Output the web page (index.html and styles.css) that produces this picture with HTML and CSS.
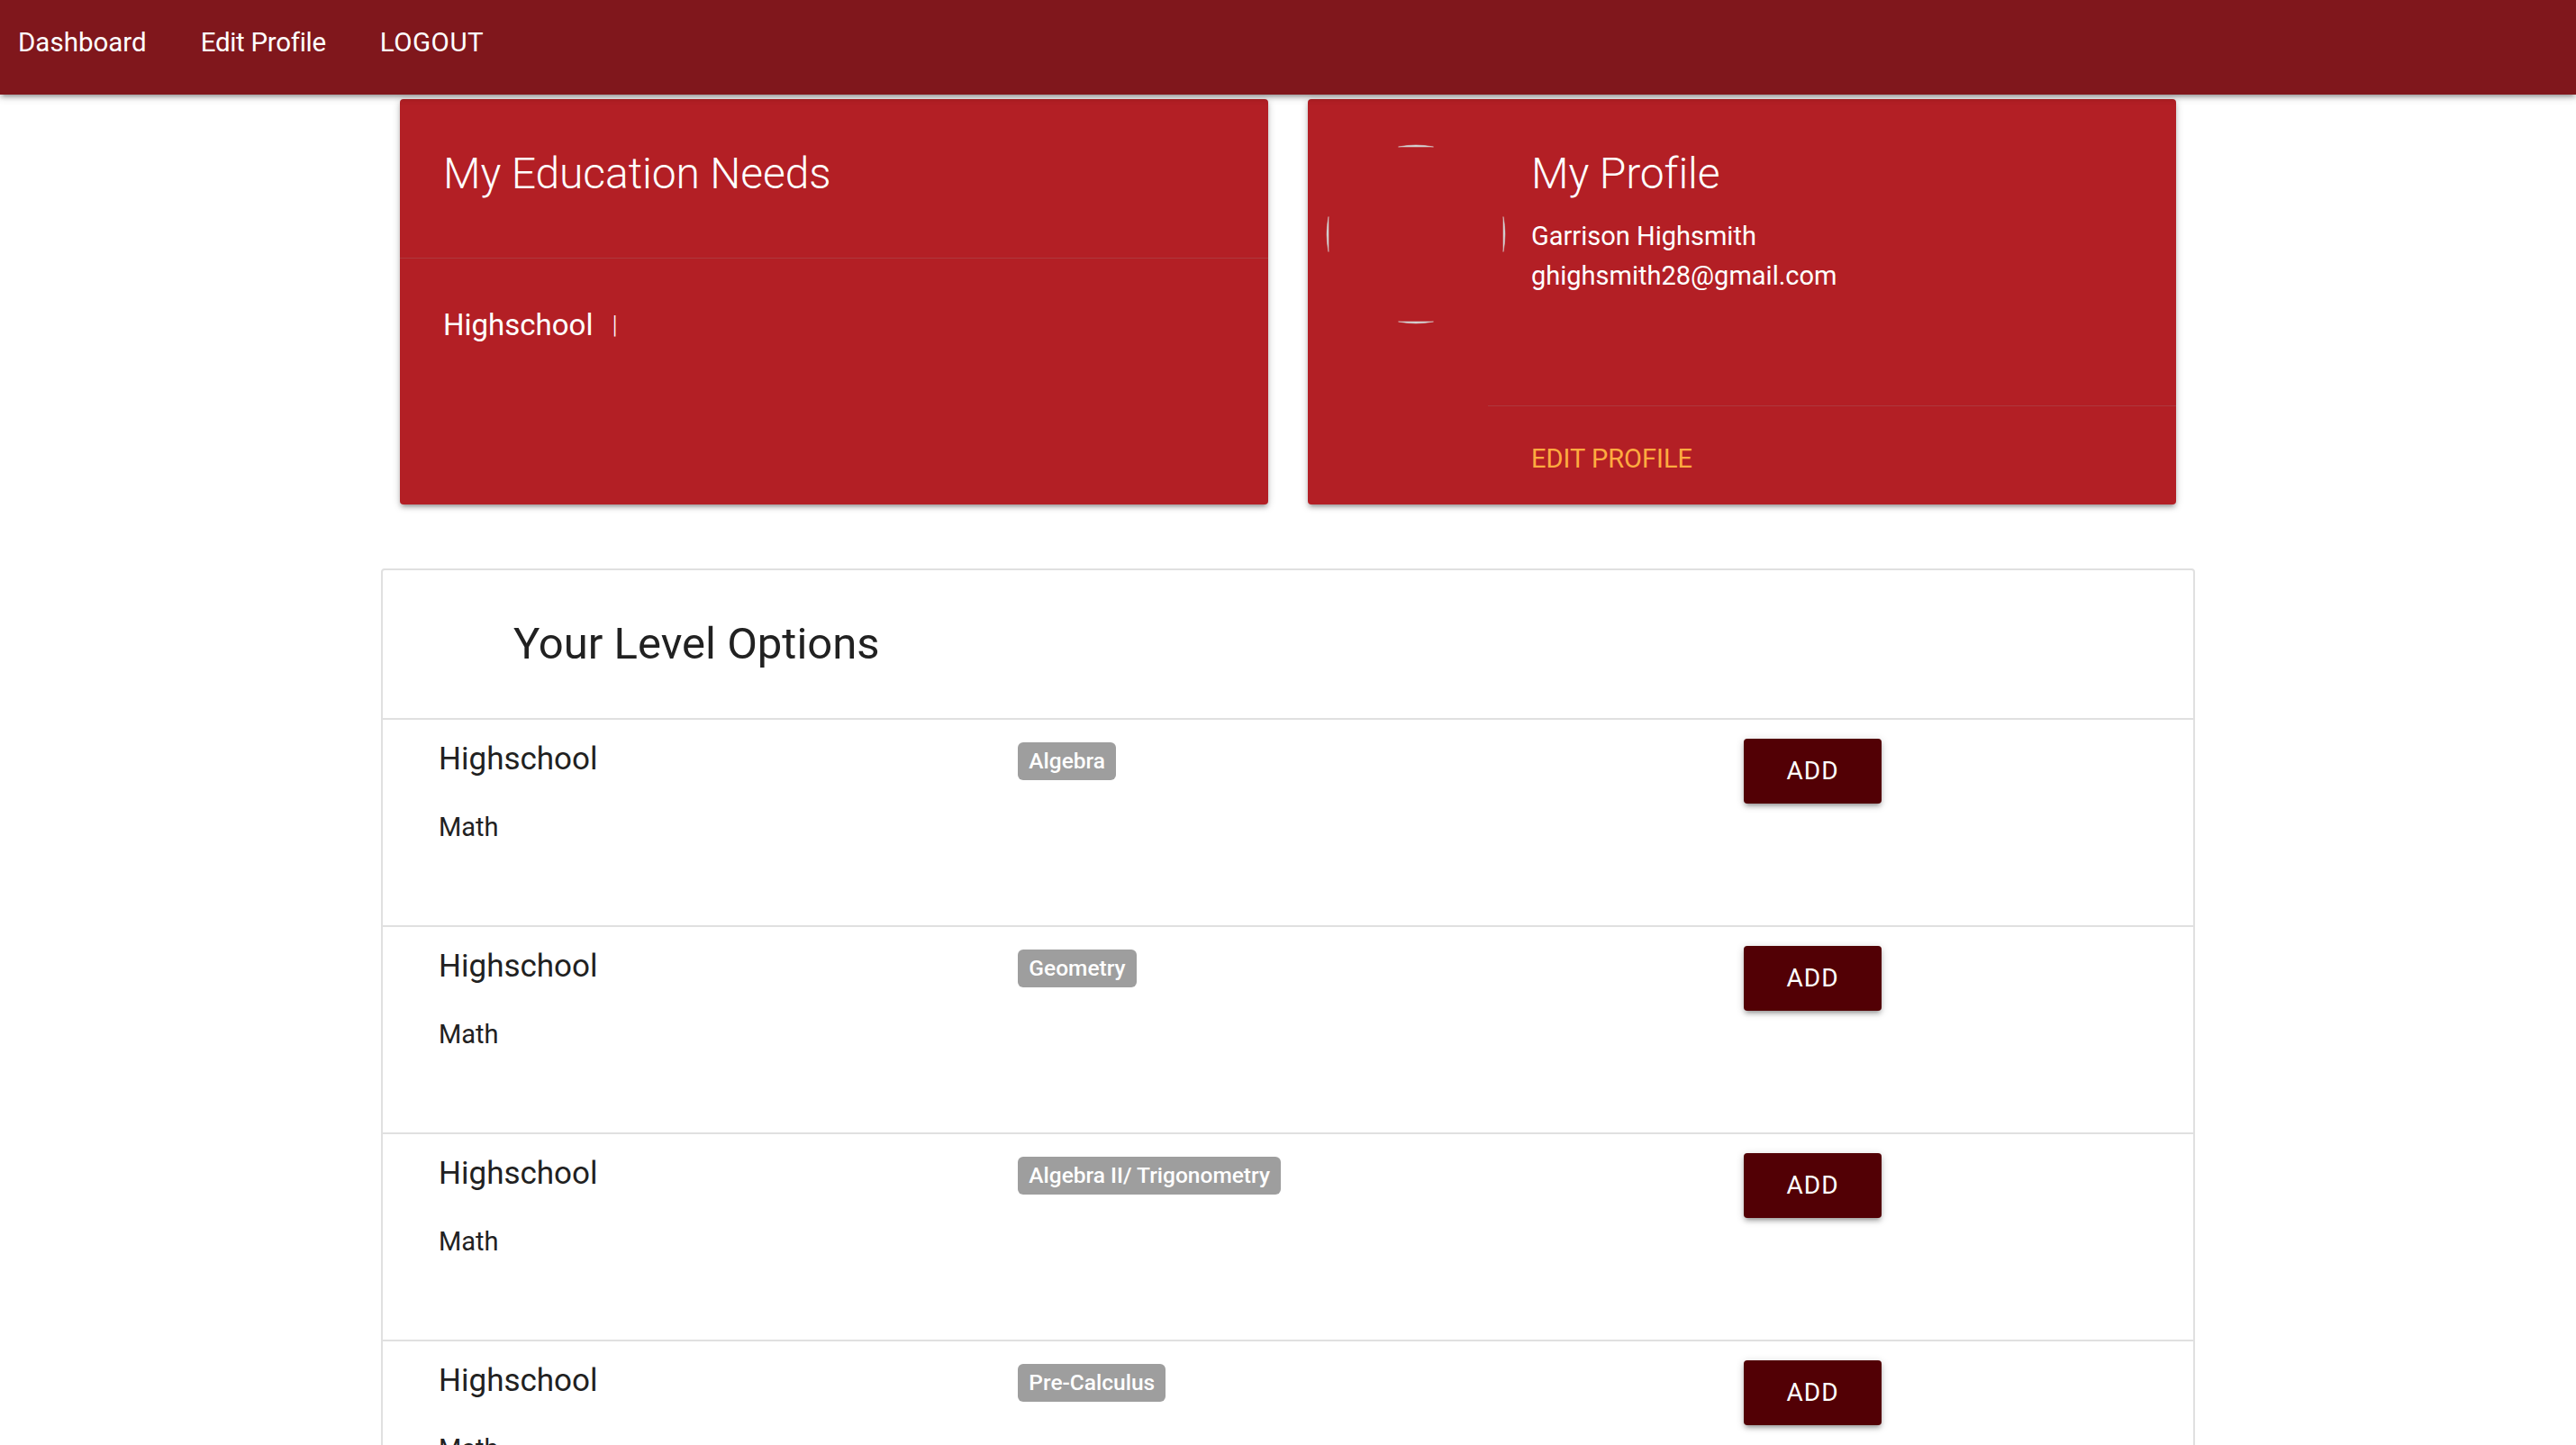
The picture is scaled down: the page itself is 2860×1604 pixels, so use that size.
FILE: index.html
```html
<!DOCTYPE html>
<html lang="en">
<head>
<meta charset="utf-8">
<title>Dashboard</title>
<link rel="stylesheet" href="styles.css">
</head>
<body>
<nav class="topnav">
  <ul class="nav-links">
    <li><a href="#">Dashboard</a></li>
    <li><a href="#">Edit Profile</a></li>
    <li><a href="#">LOGOUT</a></li>
  </ul>
</nav>

<main class="page">
  <section class="cards-row">
    <div class="card">
      <div class="card-content">
        <span class="card-title">My Education Needs</span>
      </div>
      <div class="card-action needs-action">
        <span class="need">Highschool</span><span class="sep">|</span>
      </div>
    </div>

    <div class="card horizontal">
      <div class="card-image">
        <svg class="avatar" width="200" height="300" viewBox="0 0 200 300" aria-hidden="true">
          <g fill="#cfcfcf" stroke="#d8d8d8" stroke-width="0.5">
            <path d="M100.5 53.0 A99 99 0 0 1 139.5 53.0 Z"/>
            <path d="M100.5 247.0 A99 99 0 0 0 139.5 247.0 Z"/>
            <path d="M23.0 130.5 A99 99 0 0 0 23.0 169.5 Z"/>
            <path d="M217.0 130.5 A99 99 0 0 1 217.0 169.5 Z"/>
          </g>
        </svg>
      </div>
      <div class="card-stacked">
        <div class="card-content profile-content">
          <span class="card-title">My Profile</span>
          <p>Garrison Highsmith</p>
          <p>ghighsmith28@gmail.com</p>
        </div>
        <div class="card-action">
          <a href="#" class="action-link">Edit Profile</a>
        </div>
      </div>
    </div>
  </section>

  <ul class="collection">
    <li class="collection-header"><h4>Your Level Options</h4></li>
    <li class="collection-item">
      <div class="col col-title"><div class="title">Highschool</div><p class="subject">Math</p></div>
      <div class="col col-badge"><span class="badge">Algebra</span></div>
      <div class="col col-btn"><a href="#" class="btn">Add</a></div>
    </li>
    <li class="collection-item">
      <div class="col col-title"><div class="title">Highschool</div><p class="subject">Math</p></div>
      <div class="col col-badge"><span class="badge">Geometry</span></div>
      <div class="col col-btn"><a href="#" class="btn">Add</a></div>
    </li>
    <li class="collection-item">
      <div class="col col-title"><div class="title">Highschool</div><p class="subject">Math</p></div>
      <div class="col col-badge"><span class="badge">Algebra II/ Trigonometry</span></div>
      <div class="col col-btn"><a href="#" class="btn">Add</a></div>
    </li>
    <li class="collection-item">
      <div class="col col-title"><div class="title">Highschool</div><p class="subject">Math</p></div>
      <div class="col col-badge"><span class="badge">Pre-Calculus</span></div>
      <div class="col col-btn"><a href="#" class="btn">Add</a></div>
    </li>
  </ul>
</main>
</body>
</html>
```

FILE: styles.css
```css
* { box-sizing: border-box; }

html, body {
  margin: 0;
  padding: 0;
  background: #ffffff;
  font-family: Roboto, "Noto Sans", "Liberation Sans", sans-serif;
  color: #212121;
}

a { text-decoration: none; }

/* ---------- top navigation ---------- */
.topnav {
  height: 105px;
  background: #80171c;
  box-shadow: 0 4px 4px 0 rgba(0,0,0,0.14), 0 6px 2px -4px rgba(0,0,0,0.12), 0 2px 10px 0 rgba(0,0,0,0.2);
  position: relative;
  z-index: 2;
}

.nav-links {
  list-style: none;
  margin: 0;
  padding: 0 0 0 20px;
  display: flex;
  gap: 60px;
}

.nav-links a {
  display: block;
  color: #ffffff;
  font-size: 29.5px;
  line-height: 95px;
}

.nav-links li:nth-child(2) a { letter-spacing: -0.3px; }
.nav-links li:nth-child(3) a { letter-spacing: 0.5px; }

/* ---------- page ---------- */
.page {
  width: 2014px;
  margin: 0 auto;
}

.cards-row {
  display: flex;
  gap: 44px;
  padding: 5px 21px 0;
}

.card {
  flex: 1 1 0;
  height: 450px;
  background: #b31f25;
  color: #ffffff;
  border-radius: 4px;
  box-shadow: 0 4px 4px 0 rgba(0,0,0,0.14), 0 6px 2px -4px rgba(0,0,0,0.12), 0 2px 10px 0 rgba(0,0,0,0.2);
  display: flex;
  flex-direction: column;
}

.card.horizontal { flex-direction: row; }

.card-content {
  padding: 51px 48px 45px;
}

.card-title {
  display: block;
  font-size: 48px;
  font-weight: 300;
  line-height: 64px;
  letter-spacing: -0.1px;
  margin-bottom: 16px;
}

.card-action {
  border-top: 1px solid rgba(160,160,160,0.2);
  padding: 32px 48px;
  flex: 1 1 auto;
}

.needs-action {
  padding-top: 50px;
  display: flex;
  align-items: flex-start;
}

.need {
  font-size: 33px;
  line-height: 48px;
}

.sep {
  font-size: 28px;
  line-height: 48px;
  font-weight: 300;
  margin-left: 21px;
}

.card-image {
  width: 200px;
  flex: 0 0 200px;
  position: relative;
}

.avatar {
  display: block;
  overflow: visible;
}

.card-stacked {
  flex: 1 1 auto;
  display: flex;
  flex-direction: column;
}

.profile-content {
  flex: 1 1 auto;
}

.profile-content .card-title { margin-bottom: 15px; }

.profile-content p {
  margin: 0;
  font-size: 29px;
  line-height: 44px;
}

.card-stacked .card-action {
  flex: 0 0 auto;
  padding: 36px 48px 28px;
}

.action-link {
  display: block;
  color: #ffab40;
  text-transform: uppercase;
  font-size: 29px;
  line-height: 45px;
}

/* ---------- collection ---------- */
.collection {
  list-style: none;
  margin: 71px 0 0;
  padding: 0;
  border: 2px solid #e0e0e0;
  border-radius: 4px;
  overflow: hidden;
}

.collection-header {
  padding: 55px 40px 55px 145px;
  border-bottom: 2px solid #e0e0e0;
}

.collection-header h4 {
  margin: 0;
  font-size: 49px;
  font-weight: 400;
  line-height: 54px;
  letter-spacing: 0;
  color: #212121;
}

.collection-item {
  height: 230px;
  padding: 22px 40px 18px;
  border-bottom: 2px solid #e0e0e0;
  display: grid;
  grid-template-columns: 4fr 5fr 3fr;
  align-items: start;
}

.col { padding: 0 22px; }

.title {
  font-size: 35px;
  line-height: 44px;
  color: #212121;
}

.subject {
  margin: 32px 0 0;
  font-size: 29px;
  line-height: 43px;
  color: #212121;
}

.col-badge { padding-top: 3px; }
.col-btn { margin-top: -2px; padding-left: 24px; }

.badge {
  display: inline-block;
  background: #9e9e9e;
  color: #ffffff;
  font-size: 24.5px;
  font-weight: 500;
  height: 42px;
  line-height: 42px;
  padding: 0 12px;
  border-radius: 6px;
}

.btn {
  display: inline-block;
  height: 72px;
  line-height: 72px;
  padding: 0 47px;
  margin-top: 1px;
  background: #520005;
  color: #ffffff;
  font-size: 28px;
  letter-spacing: 1px;
  text-transform: uppercase;
  border-radius: 4px;
  box-shadow: 0 4px 4px 0 rgba(0,0,0,0.14), 0 6px 2px -4px rgba(0,0,0,0.12), 0 2px 10px 0 rgba(0,0,0,0.2);
}
```
